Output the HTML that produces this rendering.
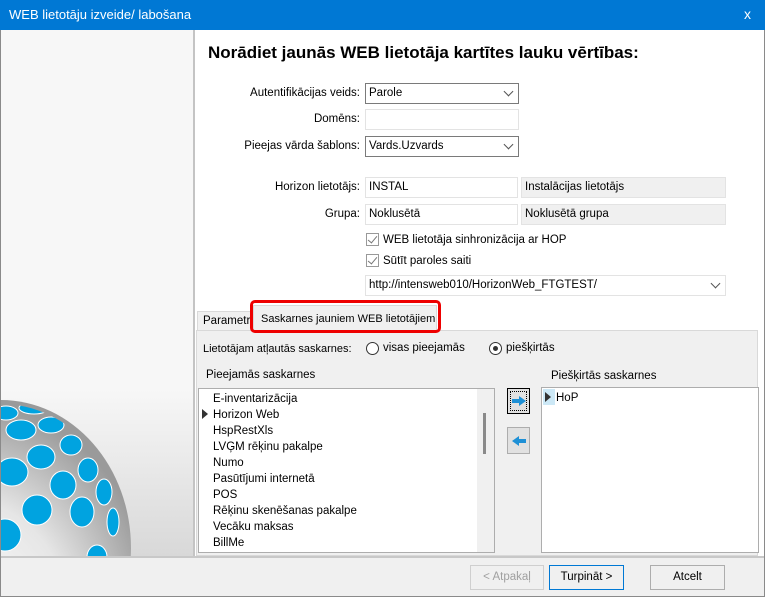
<!DOCTYPE html>
<html><head><meta charset="utf-8"><style>
*{box-sizing:border-box;margin:0;padding:0}
html,body{overflow:hidden}
body{width:765px;height:597px;font-family:"Liberation Sans",sans-serif;font-size:11.5px;color:#000;background:#fff;position:relative}
.a{position:absolute;white-space:nowrap}
.in{position:absolute;background:#fff;border:1px solid #e3e3e3;height:21px;padding:0 3px;line-height:19px;white-space:nowrap}
.cb{border-color:#7a7a7a}
.ro{background:#f0f0f0;border-color:#e3e3e3}
.lbl{position:absolute;text-align:right;width:160px;left:200px;white-space:nowrap}
.chev{position:absolute;right:6px;width:7px;height:7px;border-right:1px solid #555;border-bottom:1px solid #555;transform:rotate(45deg);top:4px}
.chk{position:absolute;width:13px;height:13px;border:1px solid #999;background:#fff}
.chk:after{content:"";position:absolute;left:3px;top:0px;width:4px;height:8px;border-right:1px solid #777;border-bottom:1px solid #777;transform:rotate(40deg)}
.btn{position:absolute;top:565px;height:25px;border:1px solid #adadad;background:#e1e1e1;text-align:center;line-height:23px}
.li{position:absolute;left:213px;white-space:nowrap}
</style></head><body>
<div class="a" style="left:0;top:0;width:765px;height:597px;border:1px solid #8a8a8a"></div>
<div class="a" style="left:0;top:0;width:765px;height:30px;background:#0078d4;color:#fff;font-size:13px;padding:7px 9px">WEB lietotāju izveide/ labošana<span class="a" style="right:14px;top:6px;font-size:14px">x</span></div>
<div class="a" style="left:1px;top:30px;width:194px;height:527px;background:#f7f7f7;border-right:2px solid #c4c4c4;overflow:hidden">
<svg width="193" height="527" style="position:absolute;left:0;top:0">
<defs><radialGradient id="g" cx="0.35" cy="0.75" r="0.75"><stop offset="0" stop-color="#fff"/><stop offset="0.55" stop-color="#e6e6e6"/><stop offset="1" stop-color="#9a9a9a"/></radialGradient>
<linearGradient id="bg" x1="0" y1="0" x2="0" y2="1"><stop offset="0" stop-color="#f7f7f7"/><stop offset="1" stop-color="#d8d8d8"/></linearGradient>
<clipPath id="c"><ellipse cx="0" cy="518" rx="126" ry="144"/></clipPath></defs>
<rect x="0" y="360" width="193" height="167" fill="url(#bg)"/>
<ellipse cx="0" cy="518" rx="130" ry="148" fill="url(#g)"/>
<g fill="#00a3e0" stroke="#fff" stroke-width="1" clip-path="url(#c)">
<ellipse cx="5" cy="383" rx="12" ry="7"/><ellipse cx="33" cy="378" rx="15" ry="6"/>
<ellipse cx="20" cy="400" rx="15" ry="10"/><ellipse cx="50" cy="395" rx="13" ry="8"/>
<ellipse cx="40" cy="427" rx="14" ry="12"/><ellipse cx="70" cy="415" rx="11" ry="10"/>
<ellipse cx="11" cy="442" rx="16" ry="14"/><ellipse cx="62" cy="455" rx="13" ry="14"/><ellipse cx="87" cy="440" rx="10" ry="12"/>
<ellipse cx="36" cy="480" rx="15" ry="15"/><ellipse cx="81" cy="482" rx="12" ry="15"/><ellipse cx="103" cy="462" rx="8" ry="13"/><ellipse cx="112" cy="492" rx="6" ry="14"/>
<ellipse cx="4" cy="505" rx="16" ry="16"/><ellipse cx="96" cy="527" rx="10" ry="12"/>
</g></svg></div>
<div class="a" style="left:208px;top:43px;font-size:17px;font-weight:bold">Norādiet jaunās WEB lietotāja kartītes lauku vērtības:</div>
<div class="lbl" style="top:87px">Autentifikācijas veids:</div>
<div class="in cb" style="left:365px;top:83px;width:154px">Parole<span class="chev"></span></div>
<div class="lbl" style="top:113px">Domēns:</div>
<div class="in" style="left:365px;top:109px;width:154px"></div>
<div class="lbl" style="top:140px">Pieejas vārda šablons:</div>
<div class="in cb" style="left:365px;top:136px;width:154px">Vards.Uzvards<span class="chev"></span></div>
<div class="lbl" style="top:181px">Horizon lietotājs:</div>
<div class="in" style="left:365px;top:177px;width:153px">INSTAL</div>
<div class="in ro" style="left:521px;top:177px;width:205px">Instalācijas lietotājs</div>
<div class="lbl" style="top:208px">Grupa:</div>
<div class="in" style="left:365px;top:204px;width:153px">Noklusētā</div>
<div class="in ro" style="left:521px;top:204px;width:205px">Noklusētā grupa</div>
<div class="chk" style="left:366px;top:233px"></div><div class="a" style="left:383px;top:234px">WEB lietotāja sinhronizācija ar HOP</div>
<div class="chk" style="left:366px;top:254px"></div><div class="a" style="left:383px;top:255px">Sūtīt paroles saiti</div>
<div class="in" style="left:365px;top:275px;width:361px">http://intensweb010/HorizonWeb_FTGTEST/<span class="chev"></span></div>
<div class="a" style="left:196px;top:330px;width:562px;height:226px;background:#f0f0f0;border:1px solid #d9d9d9"></div>
<div class="a" style="left:197px;top:311px;width:56px;height:20px;background:#f0f0f0;border:1px solid #d9d9d9;padding:3px 5px;overflow:hidden">Parametri</div>
<div class="a" style="left:253px;top:305px;width:184px;height:26px;background:#f0f0f0;border:1px solid #d9d9d9;border-bottom:none;padding:7px 7px;font-size:11px">Saskarnes jauniem WEB lietotājiem</div>
<div class="a" style="left:250px;top:300px;width:191px;height:33px;border:3px solid #e00;border-radius:5px"></div>
<div class="a" style="left:203px;top:343px;font-size:11px">Lietotājam atļautās saskarnes:</div>
<div class="a" style="left:366px;top:342px;width:13px;height:13px;border:1px solid #333;border-radius:50%;background:#fff"></div>
<div class="a" style="left:383px;top:342px">visas pieejamās</div>
<div class="a" style="left:489px;top:342px;width:13px;height:13px;border:1px solid #333;border-radius:50%;background:#fff"><div class="a" style="left:3px;top:3px;width:5px;height:5px;border-radius:50%;background:#333"></div></div>
<div class="a" style="left:506px;top:342px">piešķirtās</div>
<div class="a" style="left:206px;top:369px">Pieejamās saskarnes</div>
<div class="a" style="left:551px;top:370px">Piešķirtās saskarnes</div>
<div class="a" style="left:198px;top:388px;width:297px;height:165px;background:#fff;border:1px solid #adadad"></div>
<div class="a" style="left:477px;top:389px;width:17px;height:163px;background:#f0f0f0"></div>
<div class="a" style="left:483px;top:413px;width:3px;height:41px;background:#8a8a8a"></div>
<div class="a" style="left:202px;top:409px;width:0;height:0;border-left:6px solid #333;border-top:5px solid transparent;border-bottom:5px solid transparent"></div>
<div class="li" style="top:393px">E-inventarizācija</div>
<div class="li" style="top:409px">Horizon Web</div>
<div class="li" style="top:425px">HspRestXls</div>
<div class="li" style="top:441px">LVĢM rēķinu pakalpe</div>
<div class="li" style="top:457px">Numo</div>
<div class="li" style="top:473px">Pasūtījumi internetā</div>
<div class="li" style="top:489px">POS</div>
<div class="li" style="top:505px">Rēķinu skenēšanas pakalpe</div>
<div class="li" style="top:521px">Vecāku maksas</div>
<div class="li" style="top:537px">BillMe</div>
<div class="a" style="left:507px;top:388px;width:23px;height:26px;border:1px solid #000;background:#e1e1e1"><div class="a" style="left:2px;top:2px;width:17px;height:20px;border:1px dotted #000"></div>
<svg class="a" style="left:4px;top:7px" width="14" height="10"><path d="M0 3h7V0l7 5-7 5V7H0z" fill="#1e90d6"/></svg></div>
<div class="a" style="left:507px;top:427px;width:23px;height:27px;border:1px solid #adadad;background:#e1e1e1">
<svg class="a" style="left:4px;top:8px" width="14" height="10"><path d="M14 3H7V0L0 5l7 5V7h7z" fill="#1e90d6"/></svg></div>
<div class="a" style="left:541px;top:387px;width:218px;height:166px;background:#fff;border:1px solid #adadad"></div>
<div class="a" style="left:543px;top:389px;width:12px;height:16px;background:#cce8f6"></div>
<div class="a" style="left:545px;top:392px;width:0;height:0;border-left:6px solid #333;border-top:5px solid transparent;border-bottom:5px solid transparent"></div>
<div class="a" style="left:556px;top:392px">HoP</div>
<div class="a" style="left:1px;top:556px;width:763px;height:40px;background:#f0f0f0;border-top:2px solid #c8c8c8"></div>
<div class="btn" style="left:470px;width:74px;color:#a0a0a0;background:#f0f0f0;border-color:#cfcfcf">&lt; Atpakaļ</div>
<div class="btn" style="left:549px;width:75px;border-color:#0078d4;background:#f0f0f0">Turpināt &gt;</div>
<div class="btn" style="left:650px;width:75px;background:#f0f0f0">Atcelt</div>
</body></html>
